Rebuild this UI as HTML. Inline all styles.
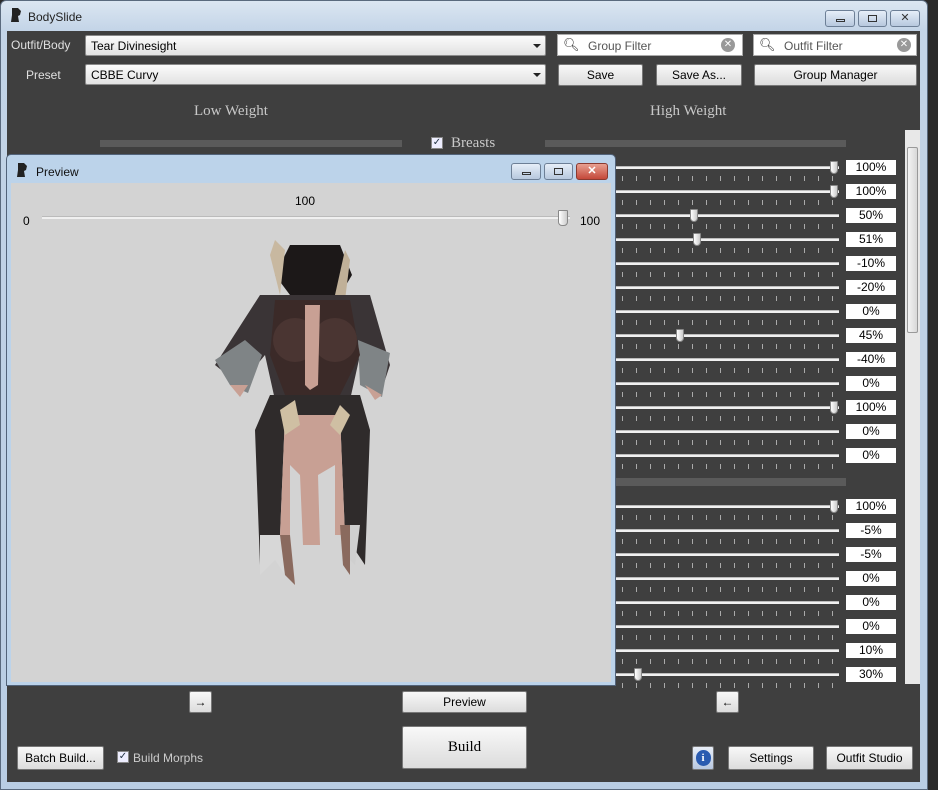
<!DOCTYPE html>
<html><head><meta charset="utf-8"><style>
*{box-sizing:border-box;margin:0;padding:0}
body{width:938px;height:790px;background:#2a2a2a;font-family:"Liberation Sans",sans-serif;font-size:12px;position:relative;overflow:hidden}
.abs{position:absolute}
.frame{left:0;top:0;width:928px;height:790px;background:linear-gradient(#dbe6f2,#c3d4e7 30px,#b9cde3);border:1px solid #5a6a7e;border-radius:6px 6px 0 0}
.body{left:7px;top:31px;width:913px;height:751px;background:#3f3f3f}
.lbl{color:#e0e0e0;font-size:12px}
.combo{background:linear-gradient(#fbfbfb,#e2e2e2);border:1px solid #8a8a8a;border-radius:2px;height:21px;color:#000;padding:3px 5px;font-size:12px}
.combo:after{content:"";position:absolute;right:4px;top:8px;border:4px solid transparent;border-top:4px solid #222}
.btn{background:linear-gradient(#f8f8f8,#dcdcdc);border:1px solid #777;border-radius:2px;color:#000;text-align:center;font-size:12px}
.filter{background:#fff;border:1px solid #aaa;height:22px;color:#555;padding:4px 0 0 30px;font-size:12px}
.serif{font-family:"Liberation Serif",serif;color:#c8c8c8;font-size:15px}
.track{height:3px;background:#f0f0f0;border-top:1px solid #bbb}
.val{background:#fff;width:50px;height:15px;text-align:center;font-size:12px;line-height:15px;color:#000}
.ticks{height:5px;background:repeating-linear-gradient(90deg,transparent 0 7px,#aaa 7px 8px,transparent 8px 14px)}
.thumb{width:8px;height:13px;background:linear-gradient(90deg,#fff,#ccc);border:1px solid #888;border-radius:1px 1px 4px 4px}
.wb{height:17px;border:1px solid #6d7f96;border-radius:3px;background:linear-gradient(#e6eef8,#b7c8de)}
</style></head><body>
<div class="abs frame"></div>
<svg class="abs" style="left:9px;top:7px" width="14" height="16"><path d="M3 1h6l3 3-1 4-2 1 1 6H2l1-7z" fill="#222"/></svg>
<div class="abs" style="left:28px;top:10px;font-size:12px;color:#222">BodySlide</div>
<div class="abs wb" style="left:825px;top:10px;width:30px"><div class="abs" style="left:10px;top:8px;width:9px;height:3px;border:1px solid #333"></div></div>
<div class="abs wb" style="left:858px;top:10px;width:29px"><div class="abs" style="left:9px;top:4px;width:9px;height:7px;border:1px solid #333"></div></div>
<div class="abs wb" style="left:890px;top:10px;width:30px;text-align:center;font-size:11px;color:#333">✕</div>
<div class="abs body"></div>
<div class="abs lbl" style="left:11px;top:38px">Outfit/Body</div>
<div class="abs lbl" style="left:26px;top:68px">Preset</div>
<div class="abs combo" style="left:85px;top:35px;width:461px">Tear Divinesight</div>
<div class="abs combo" style="left:85px;top:64px;width:461px">CBBE Curvy</div>
<div class="abs filter" style="left:557px;top:34px;width:186px">Group Filter</div>
<div class="abs filter" style="left:753px;top:34px;width:164px">Outfit Filter</div>
<div class="abs" style="left:563px;top:37px;font-size:13px;color:#333">🔍︎</div>
<div class="abs" style="left:759px;top:37px;font-size:13px;color:#333">🔍︎</div>
<div class="abs" style="left:721px;top:38px;width:14px;height:14px;border-radius:7px;background:#999;color:#fff;font-size:10px;text-align:center;line-height:14px">✕</div>
<div class="abs" style="left:897px;top:38px;width:14px;height:14px;border-radius:7px;background:#999;color:#fff;font-size:10px;text-align:center;line-height:14px">✕</div>
<div class="abs btn" style="left:558px;top:64px;width:85px;height:22px;line-height:20px">Save</div>
<div class="abs btn" style="left:656px;top:64px;width:86px;height:22px;line-height:20px">Save As...</div>
<div class="abs btn" style="left:754px;top:64px;width:163px;height:22px;line-height:20px">Group Manager</div>
<div class="abs serif" style="left:194px;top:103px">Low Weight</div>
<div class="abs serif" style="left:650px;top:103px">High Weight</div>
<div class="abs" style="left:100px;top:140px;width:302px;height:7px;background:#5a5a5a"></div>
<div class="abs" style="left:545px;top:140px;width:301px;height:7px;background:#5a5a5a"></div>
<div class="abs" style="left:431px;top:137px;width:12px;height:12px;background:#eef;border:1px solid #888;font-size:10px;line-height:10px;text-align:center;color:#234">✓</div>
<div class="abs serif" style="left:451px;top:135px">Breasts</div>
<div class="abs" style="left:615px;top:478px;width:231px;height:8px;background:#5a5a5a"></div>
<div class="abs" style="left:905px;top:130px;width:15px;height:554px;background:#e8e8e8"></div>
<div class="abs" style="left:907px;top:147px;width:11px;height:186px;background:linear-gradient(90deg,#f4f4f4,#d8d8d8);border:1px solid #999;border-radius:2px"></div>
<div id="rows"></div>
<script>
var g1=[[168,'100%',834],[192,'100%',834],[216,'50%',694],[240,'51%',697],[264,'-10%'],[288,'-20%'],[312,'0%'],[336,'45%',680],[360,'-40%'],[384,'0%'],[408,'100%',834],[432,'0%'],[456,'0%'],[507,'100%',834],[531,'-5%'],[555,'-5%'],[579,'0%'],[603,'0%'],[627,'0%'],[651,'10%'],[675,'30%',638]];
var h='';g1.forEach(function(r){var y=r[0];
h+='<div class="abs track" style="left:615px;top:'+(y-2)+'px;width:224px"></div>';
h+='<div class="abs ticks" style="left:615px;top:'+(y+8)+'px;width:225px"></div>';
h+='<div class="abs val" style="left:846px;top:'+(y-8)+'px">'+r[1]+'</div>';
if(r[2])h+='<div class="abs thumb" style="left:'+(r[2]-4)+'px;top:'+(y-7)+'px"></div>';});
document.getElementById('rows').innerHTML=h;
</script>
<div class="abs" style="left:6px;top:154px;width:610px;height:532px;background:#bcd3ea;border:1px solid #52637a;border-radius:5px 5px 0 0"></div>
<svg class="abs" style="left:15px;top:162px" width="14" height="16"><path d="M3 1h6l3 3-1 4-2 1 1 6H2l1-7z" fill="#222"/></svg>
<div class="abs" style="left:36px;top:165px;font-size:12px;color:#111">Preview</div>
<div class="abs wb" style="left:511px;top:163px;width:30px"><div class="abs" style="left:10px;top:8px;width:9px;height:3px;border:1px solid #333"></div></div>
<div class="abs wb" style="left:544px;top:163px;width:29px"><div class="abs" style="left:9px;top:4px;width:9px;height:7px;border:1px solid #333"></div></div>
<div class="abs" style="left:576px;top:163px;width:32px;height:17px;border:1px solid #8a3a30;border-radius:3px;background:linear-gradient(#e8a090,#c4483a);color:#fff;font-size:11px;text-align:center;line-height:15px;font-weight:bold">✕</div>
<div class="abs" style="left:11px;top:183px;width:600px;height:499px;background:#d3d3d3"></div>
<div class="abs" style="left:295px;top:194px;font-size:12px">100</div>
<div class="abs" style="left:23px;top:214px;font-size:12px">0</div>
<div class="abs" style="left:580px;top:214px;font-size:12px">100</div>
<div class="abs track" style="left:42px;top:216px;width:528px"></div>
<div class="abs thumb" style="left:558px;top:210px;width:10px;height:16px"></div>
<svg class="abs" style="left:200px;top:235px" width="200" height="365">
<polygon points="75,40 90,10 140,10 152,40 140,60 90,60" fill="#1c1818"/>
<polygon points="70,20 75,5 85,15 80,60" fill="#c8b8a0"/>
<polygon points="145,15 150,25 145,65 135,60" fill="#c0b098"/>
<polygon points="60,60 170,60 190,130 180,160 160,120 150,165 110,160 75,165 65,120 40,150 15,130" fill="#3a3436"/>
<polygon points="15,125 45,105 62,120 48,158 30,150" fill="#7f8486"/>
<polygon points="158,105 190,118 182,162 160,150" fill="#7f8486"/>
<polygon points="30,150 48,150 40,162" fill="#c8a094"/>
<polygon points="165,150 182,160 175,165" fill="#c8a094"/>
<polygon points="75,65 150,65 160,120 140,160 85,160 70,120" fill="#3b2a28"/>
<ellipse cx="95" cy="105" rx="22" ry="22" fill="#4a3532"/>
<ellipse cx="135" cy="105" rx="22" ry="22" fill="#4a3532"/>
<polygon points="105,70 120,70 118,150 110,155 105,150" fill="#c8a094"/>
<polygon points="70,160 160,160 170,195 165,330 145,300 140,180 85,180 80,300 60,330 55,195" fill="#2f2b2b"/>
<polygon points="85,180 140,180 145,300 135,300 135,230 118,240 120,310 103,310 100,240 90,230 90,300 80,300" fill="#c8a094"/>
<polygon points="60,300 80,300 85,340 75,325 60,340" fill="#d7d7d7"/>
<polygon points="140,290 160,290 155,330 145,320" fill="#cfcfcf"/>
<polygon points="80,300 90,300 95,350 85,340" fill="#8a6a5e"/>
<polygon points="140,290 150,290 150,340 143,330" fill="#8a6a5e"/>
<polygon points="80,175 95,165 100,190 85,200" fill="#cfbfa3"/>
<polygon points="140,170 150,180 140,200 130,190" fill="#cfbfa3"/>
</svg>
<div class="abs btn" style="left:189px;top:691px;width:23px;height:22px;line-height:20px">→</div>
<div class="abs btn" style="left:402px;top:691px;width:125px;height:22px;line-height:20px">Preview</div>
<div class="abs btn" style="left:716px;top:691px;width:23px;height:22px;line-height:20px">←</div>
<div class="abs btn" style="left:402px;top:726px;width:125px;height:43px;line-height:40px;font-family:'Liberation Serif',serif;font-size:15px">Build</div>
<div class="abs btn" style="left:17px;top:746px;width:87px;height:24px;line-height:22px">Batch Build...</div>
<div class="abs" style="left:117px;top:751px;width:12px;height:12px;background:#eef;border:1px solid #888;font-size:10px;line-height:10px;text-align:center;color:#234">✓</div>
<div class="abs lbl" style="left:133px;top:751px;color:#ccc">Build Morphs</div>
<div class="abs" style="left:692px;top:746px;width:22px;height:24px;background:linear-gradient(#e8eef8,#b8c8e0);border:1px solid #777;border-radius:2px"><div style="margin:3px auto;width:15px;height:16px;border-radius:8px;background:#2a5bb0;color:#fff;font-weight:bold;font-size:11px;text-align:center;line-height:16px;font-family:'Liberation Serif',serif">i</div></div>
<div class="abs btn" style="left:728px;top:746px;width:86px;height:24px;line-height:22px">Settings</div>
<div class="abs btn" style="left:826px;top:746px;width:87px;height:24px;line-height:22px">Outfit Studio</div>
</body></html>
